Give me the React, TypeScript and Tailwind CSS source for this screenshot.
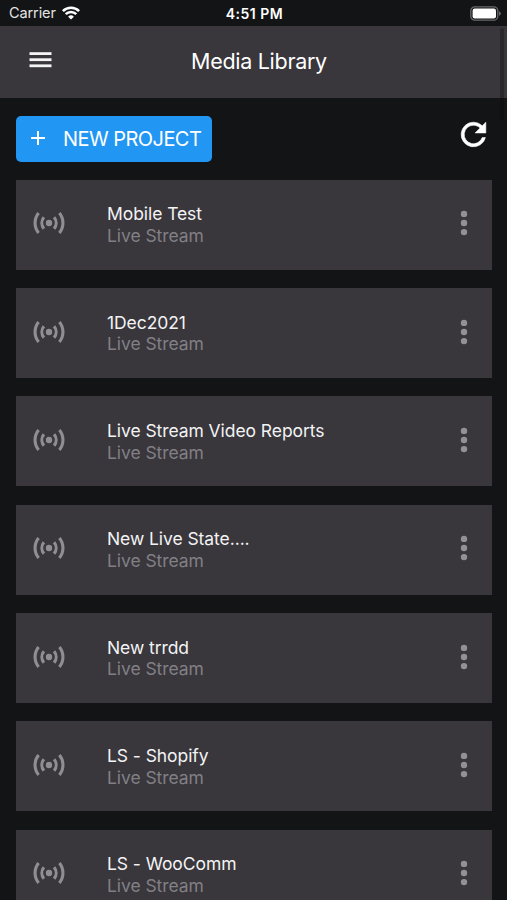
import React from "react";
import { MdAdd } from "react-icons/md";

interface MediaItem {
  id: number;
  title: string;
  type: string;
}

const mediaItems: MediaItem[] = [
  { id: 1, title: "Mobile Test", type: "Live Stream" },
  { id: 2, title: "1Dec2021", type: "Live Stream" },
  { id: 3, title: "Live Stream Video Reports", type: "Live Stream" },
  { id: 4, title: "New Live State....", type: "Live Stream" },
  { id: 5, title: "New trrdd", type: "Live Stream" },
  { id: 6, title: "LS - Shopify", type: "Live Stream" },
  { id: 7, title: "LS - WooComm", type: "Live Stream" },
];

const WifiIcon: React.FC = () => (
  <svg className="ml-[6px] h-[14px] w-[18px]" viewBox="0 0 18 14" fill="none">
    <path d="M0.9 5.1A11.4 11.4 0 0 1 17.1 5.1" stroke="white" strokeWidth="2.6" />
    <path d="M3.7 8.2A7.4 7.4 0 0 1 14.3 8.2" stroke="white" strokeWidth="2.4" />
    <path d="M9 13.6L6.1 10.8A4.1 4.1 0 0 1 11.9 10.8Z" fill="white" />
  </svg>
);

const BatteryIcon: React.FC = () => (
  <svg className="h-[15px] w-[31px]" viewBox="0 0 31 15" fill="none">
    <rect x="0.8" y="0.8" width="27" height="13.4" rx="4" stroke="#68696b" strokeWidth="1.3" />
    <rect x="2.6" y="2.6" width="23.4" height="9.8" rx="2.2" fill="white" />
    <path d="M29 5.2C30.4 5.8 30.8 6.6 30.8 7.5S30.4 9.2 29 9.8Z" fill="#68696b" />
  </svg>
);

const MenuIcon: React.FC = () => (
  <svg className="h-[18px] w-[23px]" viewBox="0 0 23 18" fill="#f4f4f5">
    <rect x="0.5" y="1.2" width="22" height="2.8" />
    <rect x="0.5" y="7.3" width="22" height="2.8" />
    <rect x="0.5" y="13.4" width="22" height="2.8" />
  </svg>
);

const RefreshIcon: React.FC = () => (
  <svg className="h-[37px] w-[37px]" viewBox="0 0 24 24" fill="white" stroke="white" strokeWidth="0.35">
    <path d="M17.65 6.35A7.96 7.96 0 0 0 12 4a8 8 0 1 0 7.73 10h-2.08A6 6 0 1 1 12 6c1.66 0 3.14.69 4.22 1.78L13 11h7V4z" />
  </svg>
);

const LiveIcon: React.FC = () => (
  <svg className="-mt-[3px] h-[22px] w-[32px]" viewBox="0 0 32 22" fill="none" stroke="#8f8e93" strokeWidth="3.1">
    <circle cx="16" cy="11" r="3.2" fill="#8f8e93" stroke="none" />
    <path d="M10.9 5.3A9 9 0 0 0 10.9 16.7" />
    <path d="M21.1 5.3A9 9 0 0 1 21.1 16.7" />
    <path d="M5.6 1.1A15.6 15.6 0 0 0 5.6 20.9" />
    <path d="M26.4 1.1A15.6 15.6 0 0 1 26.4 20.9" />
  </svg>
);

const MoreIcon: React.FC = () => (
  <svg className="h-[26px] w-[8px]" viewBox="0 0 8 26" fill="#929195">
    <circle cx="4" cy="3.9" r="3.2" />
    <circle cx="4" cy="13" r="3.2" />
    <circle cx="4" cy="22.1" r="3.2" />
  </svg>
);

const MediaCard: React.FC<{ item: MediaItem }> = ({ item }) => (
  <li className="flex h-[90px] shrink-0 items-center bg-[#39363c] pl-[17px] pr-[24px]">
    <LiveIcon />
    <div className="ml-[42px] flex-1 pt-[0.8px] text-[17.5px] leading-[21.7px] tracking-[-0.07px]">
      <p className="text-[#f3f3f4]">{item.title}</p>
      <p className="text-[#818085]">{item.type}</p>
    </div>
    <button aria-label="More options" className="-mt-[3px]">
      <MoreIcon />
    </button>
  </li>
);

const App: React.FC = () => {
  return (
    <div className="relative flex h-[900px] w-full flex-col overflow-hidden bg-[#131416] font-['Inter','Liberation_Sans',sans-serif] text-white">
      {/* Status bar */}
      <div className="grid h-[25.6px] shrink-0 grid-cols-3 items-center pl-[8px] pr-[6px] pt-[1px]">
        <div className="flex items-center pl-[1px] text-[14.5px] tracking-[-0.1px] text-[#e4e4e4]">
          Carrier
          <WifiIcon />
        </div>
        <div className="whitespace-nowrap text-center text-[14px] font-semibold tracking-[0.5px]">4:51 PM</div>
        <div className="flex justify-end">
          <BatteryIcon />
        </div>
      </div>

      {/* Header */}
      <header className="grid h-[72px] shrink-0 grid-cols-[52px_1fr_41px] items-center bg-[#39363c]">
        <button aria-label="Menu" className="-mt-[3px] pl-[29px]">
          <MenuIcon />
        </button>
        <h1 className="text-center text-[21.5px] tracking-[-0.3px]">Media Library</h1>
      </header>

      {/* Actions */}
      <div className="flex shrink-0 items-start justify-between pl-4 pr-[15px] pt-[18px]">
        <button className="flex h-[46px] w-[196px] items-center rounded-[5px] bg-[#2296f3] pl-[10px]">
          <MdAdd className="-mt-[2px] h-[24px] w-[24px]" />
          <span className="ml-[13px] whitespace-nowrap text-[20px] tracking-[-0.55px]">NEW PROJECT</span>
        </button>
        <button aria-label="Refresh">
          <RefreshIcon />
        </button>
      </div>

      <ul className="mt-[18.1px] flex flex-col gap-[18.33px] pl-4 pr-[15.5px]">
        {mediaItems.map((item) => (
          <MediaCard key={item.id} item={item} />
        ))}
      </ul>

      {/* Scroll indicator */}
      <div className="absolute right-[3px] top-[28px] h-[92px] w-[4px] rounded-full bg-black/25" />
    </div>
  );
};

export default App;
